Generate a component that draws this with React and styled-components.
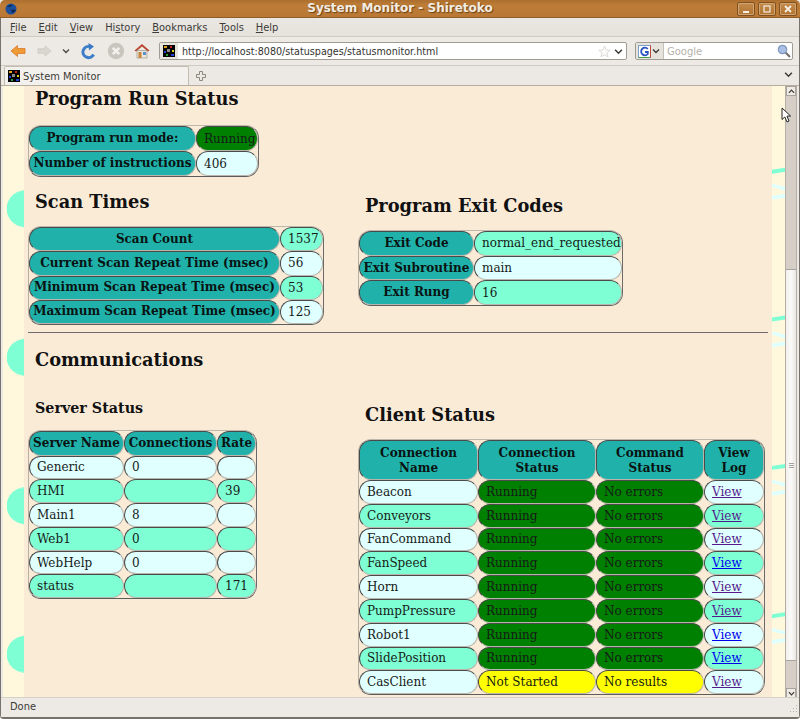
import React from "react";
import styled, { createGlobalStyle } from "styled-components";

const COLORS = {
  page: "#faebd7",
  strip: "#fff8dc",
  head: "#20b2aa",
  cyan: "#e0ffff",
  aqua: "#7fffd4",
  green: "#008000",
  yellow: "#ffff00",
  chrome: "#edeae5",
  line: "#cfcac2",
};

const Global = createGlobalStyle`
  html, body { margin: 0; padding: 0; overflow: hidden; }
  body { font-family: "DejaVu Sans", sans-serif; background: ${COLORS.chrome}; }
`;

const Window = styled.div`
  position: relative;
  width: 800px;
  height: 719px;
  display: flex;
  flex-direction: column;
  box-sizing: border-box;
  overflow: hidden;
  border-bottom: 2px solid #77736c;
  border-radius: 5px 5px 4px 4px;
  background: ${COLORS.chrome};
  color: #3c3b37;
  font-size: 9.9px;
`;

const TitleBar = styled.div`
  height: 18px;
  flex: none;
  display: flex;
  align-items: center;
  justify-content: space-between;
  padding: 0 3px 0 5px;
  background: linear-gradient(#ad6f2e, #bd7d38 30%, #b97733);
  border-bottom: 1px solid #8f5c28;
  box-sizing: border-box;
`;

const TitleText = styled.div`
  position: absolute;
  left: 0;
  right: 0;
  top: 1px;
  text-align: center;
  font-size: 12px;
  font-weight: bold;
  line-height: 15px;
  color: #f2ece2;
  text-shadow: 1px 1px 1px #6b4315;
`;

const WinButtons = styled.div`
  display: flex;
  gap: 3px;
`;

const WinButton = styled.div`
  width: 16px;
  height: 12px;
  border: 1px solid #80511f;
  border-radius: 2px;
  background: linear-gradient(#c48b4d, #b1742f);
  box-shadow: inset 0 0 0 1px #d2a471;
  display: flex;
  align-items: center;
  justify-content: center;
`;

const Body = styled.div`
  flex: 1;
  display: flex;
  flex-direction: column;
  border-left: 1px solid #77736c;
  border-right: 1px solid #77736c;
  min-height: 0;
`;

const MenuBar = styled.div`
  height: 18px;
  flex: none;
  display: flex;
  align-items: center;
  gap: 12px;
  padding-left: 9px;
  background: linear-gradient(#eae7e2, #e6e2dc);
  border-bottom: 1px solid ${COLORS.line};
`;

const Mnemonic = styled.span`
  text-decoration: underline;
`;

const NavBar = styled.div`
  height: 29px;
  flex: none;
  display: flex;
  align-items: center;
  padding: 0 6px 0 9px;
  box-sizing: border-box;
  border-bottom: 1px solid ${COLORS.line};
`;

const NavIcon = styled.svg`
  flex: none;
  margin-right: ${(p) => p.$gap}px;
`;

const UrlBox = styled.div`
  width: 468px;
  height: 18px;
  flex: none;
  box-sizing: border-box;
  display: flex;
  align-items: center;
  background: #fff;
  border: 1px solid #a09c94;
  border-radius: 2px;
  margin-right: 8px;
`;

const SiteBadge = styled.div`
  width: 18px;
  height: 16px;
  flex: none;
  display: flex;
  align-items: center;
  justify-content: center;
  background: #e6e2dc;
  margin-right: 4px;
`;

const UrlText = styled.span`
  flex: 1;
  font-size: 9.6px;
  color: #33322f;
  white-space: nowrap;
`;

const UrlDrop = styled.svg`
  flex: none;
  margin: 0 3px;
`;

const SearchBox = styled(UrlBox)`
  width: 158px;
  margin-right: 0;
`;

const EnginePicker = styled.div`
  width: 28px;
  height: 16px;
  flex: none;
  display: flex;
  align-items: center;
  gap: 1px;
  padding-left: 2px;
  box-sizing: border-box;
  background: #e6e2dc;
  border-right: 1px solid #c4c0b8;
  margin-right: 3px;
`;

const Placeholder = styled.span`
  flex: 1;
  font-size: 10px;
  color: #b5b1a9;
`;

const SearchLens = styled.svg`
  flex: none;
  margin-right: 1px;
`;

const TabStrip = styled.div`
  height: 20px;
  flex: none;
  display: flex;
  align-items: flex-end;
  padding: 0 6px 0 3px;
  box-sizing: border-box;
  background: #ece9e4;
  border-bottom: 1px solid #b5ada0;
`;

const Tab = styled.div`
  width: 185px;
  height: 19px;
  flex: none;
  display: flex;
  align-items: center;
  gap: 3px;
  padding-left: 3px;
  box-sizing: border-box;
  background: #f3f1ee;
  border: 1px solid #c4bcae;
  border-bottom: none;
  border-radius: 2px 2px 0 0;
  margin-right: 6px;
`;

const NewTab = styled.svg`
  flex: none;
  margin-bottom: 3px;
`;

const TabSpacer = styled.div`
  flex: 1;
`;

const TabListButton = styled.span`
  margin-bottom: 4px;
`;

const Viewport = styled.div`
  flex: 1;
  display: flex;
  min-height: 0;
  overflow: hidden;
  padding-left: 2px;
`;

const LeftStrip = styled.div`
  width: 21px;
  flex: none;
  background-color: ${COLORS.strip};
  background-image: radial-gradient(circle at 22px 74.25px, ${COLORS.aqua} 18px, transparent 18.6px);
  background-size: 21px 148.5px;
  background-position: 0 48.5px;
`;

const Page = styled.div`
  width: 748px;
  flex: none;
  background: ${COLORS.page};
  font-family: "DejaVu Serif", serif;
  color: #000;
  padding-left: 4px;
  box-sizing: border-box;
`;

const RightStrip = styled.svg`
  width: 13px;
  flex: none;
  background: ${COLORS.strip};
`;

const Scrollbar = styled.div`
  width: 10px;
  flex: none;
  display: flex;
  flex-direction: column;
  background: #d6cfc8;
  border-left: 1px solid #b5aea6;
  border-right: 1px solid #b5aea6;
`;

const ScrollArrow = styled.div`
  height: 10px;
  flex: none;
  background: #efece8;
  border: 1px solid #a8a29a;
  box-sizing: border-box;
  display: flex;
  align-items: center;
  justify-content: center;
`;

const ScrollGap = styled.div`
  height: ${(p) => p.$h}px;
  flex: none;
`;

const ScrollThumb = styled.div`
  height: 392px;
  flex: none;
  background: linear-gradient(90deg, #f2f0ed, #fbfaf9 50%, #e9e6e2);
  border-top: 1px solid #a8a29a;
  border-bottom: 1px solid #a8a29a;
  box-sizing: border-box;
  display: flex;
  flex-direction: column;
  align-items: center;
  justify-content: center;
  gap: 1px;
`;

const Grip = styled.div`
  width: 5px;
  height: 1px;
  background: #a8a29a;
`;

const StatusBar = styled.div`
  height: 20px;
  flex: none;
  display: flex;
  align-items: center;
  justify-content: space-between;
  padding: 0 1px 3px 9px;
  background: ${COLORS.chrome};
  border-top: 1px solid #d6d2ca;
  box-sizing: border-box;
`;

const ResizeGrip = styled.svg`
  flex: none;
  align-self: flex-end;
`;

const Pointer = styled.svg`
  position: absolute;
  left: 781px;
  top: 107px;
`;

const Columns = styled.div`
  display: grid;
  grid-template-columns: 330px 1fr;
`;

const Stack = styled.div`
  padding-top: ${(p) => p.$top || 0}px;
`;

const Heading = styled.h2`
  margin: ${(p) => p.$mt || 0}px 0 0 7px;
  font-size: 17.8px;
  line-height: 26px;
  font-weight: bold;
  color: #111;
`;

const SubHeading = styled.h3`
  margin: 0 0 0 7px;
  font-size: 14.3px;
  line-height: 18px;
  font-weight: bold;
  color: #111;
`;

const Table = styled.table`
  table-layout: fixed;
  border-collapse: separate;
  border-spacing: 0;
  width: ${(p) => p.$w}px;
  box-sizing: border-box;
  border: 1px solid;
  border-color: #bdb7ac #6a6a6a #5d5d5d #b5afa4;
  border-radius: 13px;
  font-size: 12px;
  margin-top: ${(p) => p.$mt}px;
`;

const CELL_BG = {
  head: COLORS.head,
  cyan: COLORS.cyan,
  aqua: COLORS.aqua,
  green: COLORS.green,
  yellow: COLORS.yellow,
};

const cellBase = `
  box-sizing: border-box;
  border: 1px solid;
  border-color: #4a4a4a #b9b5ad #b9b5ad #4a4a4a;
  border-radius: 12px;
  white-space: nowrap;
`;

const HeadCell = styled.th`
  ${cellBase}
  height: ${(p) => p.$h || 24}px;
  background: ${COLORS.head};
  padding: ${(p) => p.$drop || 0}px 0 0;
  text-align: center;
  font-weight: bold;
  color: #0a1212;
  line-height: 15px;
`;

const Cell = styled.td`
  ${cellBase}
  height: ${(p) => p.$h || 24}px;
  background: ${(p) => CELL_BG[p.$tone]};
  padding: 0 0 0 7px;
  color: #151a18;
`;

const LogLink = styled.a`
  color: ${(p) => (p.$visited ? "#551a8b" : "#0000ee")};
  text-decoration: underline;
`;

const Rule = styled.hr`
  width: 740px;
  margin: 7px 0 0 0;
  border: none;
  border-top: 1px solid #6c6c6c;
`;

const STRIPE_TOPS = [83, 231, 379.5, 528];

const Stripes = () => (
  <RightStrip viewBox="0 0 13 612" preserveAspectRatio="none">
    {STRIPE_TOPS.map((y) => (
      <g key={y}>
        <polygon points={`0,${y + 1} 13,${y - 1} 13,${y + 3} 0,${y + 5}`} fill={COLORS.aqua} />
        <polygon points={`0,${y + 15} 13,${y + 18} 13,${y + 22} 0,${y + 18}`} fill={COLORS.cyan} />
        <polygon points={`0,${y + 27} 13,${y + 25} 13,${y + 29} 0,${y + 31}`} fill={COLORS.cyan} />
      </g>
    ))}
  </RightStrip>
);

const Chevron = ({ size = 7, up = false }) => (
  <svg width={size} height={size} viewBox="0 0 8 8">
    <path d={up ? "M1 5.5 L4 2.5 L7 5.5" : "M1 2.5 L4 5.5 L7 2.5"} fill="none" stroke="#3c3b37" strokeWidth="1.4" />
  </svg>
);

const Favicon = ({ size = 12 }) => (
  <svg width={size} height={size} viewBox="0 0 12 12">
    <rect width="12" height="12" fill="#000" />
    <rect x="1" y="1" width="3" height="2" fill="#e0a020" />
    <rect x="7" y="1" width="2" height="2" fill="#d02020" />
    <rect x="4" y="4" width="3" height="3" fill="#8a8a8a" />
    <rect x="9" y="5" width="2" height="2" fill="#e0d020" />
    <rect x="1" y="6" width="2" height="2" fill="#2040d0" />
    <rect x="3" y="9" width="2" height="2" fill="#20a030" />
    <rect x="8" y="9" width="3" height="2" fill="#2040d0" />
  </svg>
);

const MonitorTable = ({ width, top, cols, children }) => (
  <Table $w={width} $mt={top}>
    <colgroup>
      {cols.map((w, i) => (
        <col key={i} width={w} />
      ))}
    </colgroup>
    <tbody>{children}</tbody>
  </Table>
);

const runStatus = [["Number of instructions", "406", "cyan"]];
const scanTimes = [
  ["Scan Count", "1537", "aqua"],
  ["Current Scan Repeat Time (msec)", "56", "cyan"],
  ["Minimum Scan Repeat Time (msec)", "53", "aqua"],
  ["Maximum Scan Repeat Time (msec)", "125", "cyan"],
];
const exitCodes = [
  ["Exit Code", "normal_end_requested", "aqua"],
  ["Exit Subroutine", "main", "cyan"],
  ["Exit Rung", "16", "aqua"],
];
const servers = [
  ["Generic", "0", ""],
  ["HMI", "", "39"],
  ["Main1", "8", ""],
  ["Web1", "0", ""],
  ["WebHelp", "0", ""],
  ["status", "", "171"],
];
const clients = [
  ["Beacon", true, true],
  ["Conveyors", true, true],
  ["FanCommand", true, true],
  ["FanSpeed", true, false],
  ["Horn", true, true],
  ["PumpPressure", true, true],
  ["Robot1", true, false],
  ["SlidePosition", true, false],
  ["CasClient", false, true],
];

const rowTone = (i) => (i % 2 === 0 ? "cyan" : "aqua");

export default function App() {
  return (
    <Window>
      <Global />
      <TitleBar>
        <svg width="12" height="12" viewBox="0 0 12 12">
          <circle cx="6" cy="6" r="5.5" fill="#1d4f9c" />
          <path d="M2 4 Q5 1 8 2 Q6 4 4 4 Z M6 7 Q9 6 11 7 Q9 10 7 10 Z" fill="#0d2a55" />
        </svg>
        <TitleText>System Monitor - Shiretoko</TitleText>
        <WinButtons>
          <WinButton>
            <svg width="8" height="8" viewBox="0 0 8 8">
              <rect x="1" y="6" width="6" height="2" fill="#f4eee4" />
            </svg>
          </WinButton>
          <WinButton>
            <svg width="8" height="8" viewBox="0 0 8 8">
              <rect x="1" y="1" width="6" height="6" fill="none" stroke="#f4eee4" strokeWidth="1.2" />
            </svg>
          </WinButton>
          <WinButton>
            <svg width="8" height="8" viewBox="0 0 8 8">
              <path d="M1 1 L7 7 M7 1 L1 7" stroke="#f4eee4" strokeWidth="1.8" />
            </svg>
          </WinButton>
        </WinButtons>
      </TitleBar>
      <Body>
        <MenuBar>
          <span><Mnemonic>F</Mnemonic>ile</span>
          <span><Mnemonic>E</Mnemonic>dit</span>
          <span><Mnemonic>V</Mnemonic>iew</span>
          <span>Hi<Mnemonic>s</Mnemonic>tory</span>
          <span><Mnemonic>B</Mnemonic>ookmarks</span>
          <span><Mnemonic>T</Mnemonic>ools</span>
          <span><Mnemonic>H</Mnemonic>elp</span>
        </MenuBar>
        <NavBar>
          <NavIcon $gap={11} width="16" height="14" viewBox="0 0 16 14">
            <path d="M1 7 L7.5 1.5 V4.5 H15 V9.5 H7.5 V12.5 Z" fill="#f09a35" stroke="#d9792a" strokeWidth="0.8" />
          </NavIcon>
          <NavIcon $gap={10} width="15" height="14" viewBox="0 0 16 14">
            <path d="M15 7 L8.5 1.5 V4.5 H1 V9.5 H8.5 V12.5 Z" fill="#d9d6d0" stroke="#cdcac4" strokeWidth="0.8" />
          </NavIcon>
          <NavIcon $gap={11} width="8" height="8" viewBox="0 0 8 8">
            <path d="M1 2.5 L4 5.5 L7 2.5" fill="none" stroke="#4a4a46" strokeWidth="1.4" />
          </NavIcon>
          <NavIcon $gap={10} width="16" height="17" viewBox="0 0 16 17">
            <path d="M12.6 11.5 A5.6 5.6 0 1 1 9 3.6" fill="none" stroke="#3f7fc9" strokeWidth="3" />
            <path d="M7.5 0 L13 3.6 L8 7.6 Z" fill="#3a78c4" />
          </NavIcon>
          <NavIcon $gap={9} width="18" height="18" viewBox="0 0 18 18">
            <circle cx="9" cy="9" r="8.2" fill="#c9c6c0" />
            <path d="M5.8 5.8 L12.2 12.2 M12.2 5.8 L5.8 12.2" stroke="#f2f0ec" strokeWidth="2.6" />
          </NavIcon>
          <NavIcon $gap={9} width="16" height="16" viewBox="0 0 16 16">
            <path d="M0.5 7.5 L8 1 L15.5 7.5 L14 8.5 L8 3.5 L2 8.5 Z" fill="#b8452f" />
            <rect x="3" y="7.5" width="10" height="7.5" fill="#ece6da" stroke="#8f8a80" strokeWidth="0.6" />
            <rect x="4.5" y="9" width="3" height="6" fill="#c9843a" />
            <rect x="9" y="9" width="3" height="3" fill="#5b92c9" />
          </NavIcon>
          <UrlBox>
            <SiteBadge>
              <Favicon />
            </SiteBadge>
            <UrlText>http://localhost:8080/statuspages/statusmonitor.html</UrlText>
            <svg width="13" height="13" viewBox="0 0 24 24">
              <path d="M12 2 L15 9 L22.5 9.7 L16.8 14.6 L18.6 22 L12 18 L5.4 22 L7.2 14.6 L1.5 9.7 L9 9 Z" fill="#fbfaf8" stroke="#d8d5cf" strokeWidth="1.6" />
            </svg>
            <UrlDrop width="9" height="9" viewBox="0 0 8 8">
              <path d="M1 2.5 L4 5.5 L7 2.5" fill="none" stroke="#3c3b37" strokeWidth="1.4" />
            </UrlDrop>
          </UrlBox>
          <SearchBox>
            <EnginePicker>
              <svg width="13" height="13" viewBox="0 0 13 13">
                <rect x="0.5" y="0.5" width="12" height="12" fill="#fff" stroke="#7f9fd0" />
                <path d="M9.8 4 A3.8 3.8 0 1 0 9.8 9 V7 H7" fill="none" stroke="#2a55c0" strokeWidth="1.8" />
                <path d="M0.5 12.5 H12.5" stroke="#4aa04a" />
                <path d="M12.5 0.5 V12.5" stroke="#c04a3a" />
              </svg>
              <Chevron size={8} />
            </EnginePicker>
            <Placeholder>Google</Placeholder>
            <SearchLens width="14" height="14" viewBox="0 0 14 14">
              <circle cx="5.5" cy="5.5" r="4.2" fill="#a9c0e4" stroke="#7f97bd" strokeWidth="1.2" />
              <path d="M8.8 8.8 L13 13" stroke="#6f6f6c" strokeWidth="2" />
            </SearchLens>
          </SearchBox>
        </NavBar>
        <TabStrip>
          <Tab>
            <Favicon />
            System Monitor
          </Tab>
          <NewTab width="12" height="12" viewBox="0 0 12 12">
            <path d="M4.5 1.5 H7.5 V4.5 H10.5 V7.5 H7.5 V10.5 H4.5 V7.5 H1.5 V4.5 H4.5 Z" fill="#ece9e4" stroke="#8c8880" />
          </NewTab>
          <TabSpacer />
          <TabListButton>
            <Chevron size={9} />
          </TabListButton>
        </TabStrip>
        <Viewport>
          <LeftStrip />
          <Page>
            <Columns>
              <Stack>
                <Heading>Program Run Status</Heading>
                <MonitorTable width={231} top={13} cols={[167, 62]}>
                  <tr>
                    <HeadCell $h={25}>Program run mode:</HeadCell>
                    <Cell $h={25} $tone="green">Running</Cell>
                  </tr>
                  {runStatus.map(([label, value, tone]) => (
                    <tr key={label}>
                      <HeadCell $h={25}>{label}</HeadCell>
                      <Cell $h={25} $tone={tone}>{value}</Cell>
                    </tr>
                  ))}
                </MonitorTable>
                <Heading $mt={12}>Scan Times</Heading>
                <MonitorTable width={296} top={11} cols={[251, 43]}>
                  {scanTimes.map(([label, value, tone]) => (
                    <tr key={label}>
                      <HeadCell $h={24.25}>{label}</HeadCell>
                      <Cell $h={24.25} $tone={tone}>{value}</Cell>
                    </tr>
                  ))}
                </MonitorTable>
              </Stack>
              <Stack $top={107}>
                <Heading>Program Exit Codes</Heading>
                <MonitorTable width={265} top={11} cols={[115, 148]}>
                  {exitCodes.map(([label, value, tone]) => (
                    <tr key={label}>
                      <HeadCell $h={24.7}>{label}</HeadCell>
                      <Cell $h={24.7} $tone={tone}>{value}</Cell>
                    </tr>
                  ))}
                </MonitorTable>
              </Stack>
            </Columns>
            <Rule />
            <Heading $mt={14}>Communications</Heading>
            <Columns>
              <Stack $top={26}>
                <SubHeading>Server Status</SubHeading>
                <MonitorTable width={229} top={13} cols={[95, 93, 39]}>
                  <tr>
                    <HeadCell $h={24.5} $drop={1}>Server Name</HeadCell>
                    <HeadCell $h={24.5} $drop={1}>Connections</HeadCell>
                    <HeadCell $h={24.5} $drop={1}>Rate</HeadCell>
                  </tr>
                  {servers.map(([name, conns, rate], i) => (
                    <tr key={name}>
                      <Cell $h={23.8} $tone={rowTone(i)}>{name}</Cell>
                      <Cell $h={23.8} $tone={rowTone(i)}>{conns}</Cell>
                      <Cell $h={23.8} $tone={rowTone(i)}>{rate}</Cell>
                    </tr>
                  ))}
                </MonitorTable>
              </Stack>
              <Stack $top={29}>
                <Heading>Client Status</Heading>
                <MonitorTable width={407} top={11} cols={[119, 118, 108, 60]}>
                  <tr>
                    <HeadCell $h={40} $drop={2}>Connection<br />Name</HeadCell>
                    <HeadCell $h={40} $drop={2}>Connection<br />Status</HeadCell>
                    <HeadCell $h={40} $drop={2}>Command<br />Status</HeadCell>
                    <HeadCell $h={40} $drop={2}>View<br />Log</HeadCell>
                  </tr>
                  {clients.map(([name, running, visited], i) => (
                    <tr key={name}>
                      <Cell $h={23.8} $tone={rowTone(i)}>{name}</Cell>
                      <Cell $h={23.8} $tone={running ? "green" : "yellow"}>{running ? "Running" : "Not Started"}</Cell>
                      <Cell $h={23.8} $tone={running ? "green" : "yellow"}>{running ? "No errors" : "No results"}</Cell>
                      <Cell $h={23.8} $tone={rowTone(i)}>
                        <LogLink href="#" $visited={visited}>View</LogLink>
                      </Cell>
                    </tr>
                  ))}
                </MonitorTable>
              </Stack>
            </Columns>
          </Page>
          <Stripes />
          <Scrollbar>
            <ScrollArrow>
              <Chevron size={7} up />
            </ScrollArrow>
            <ScrollGap $h={173} />
            <ScrollThumb>
              <Grip />
              <Grip />
              <Grip />
            </ScrollThumb>
            <ScrollGap $h={27} />
            <ScrollArrow>
              <Chevron size={7} />
            </ScrollArrow>
          </Scrollbar>
        </Viewport>
        <StatusBar>
          Done
          <ResizeGrip width="10" height="10" viewBox="0 0 10 10">
            <path d="M8 1 h1 v1 h-1 z M5 4 h1 v1 h-1 z M8 4 h1 v1 h-1 z M2 7 h1 v1 h-1 z M5 7 h1 v1 h-1 z M8 7 h1 v1 h-1 z" fill="#b5b1a9" />
          </ResizeGrip>
        </StatusBar>
      </Body>
      <Pointer width="11" height="17" viewBox="0 0 11 17">
        <path d="M1 1 L1 12.5 L3.8 10 L6 15 L8 14 L6 9.2 L9.6 9 Z" fill="#fff" stroke="#222" strokeWidth="1" />
      </Pointer>
    </Window>
  );
}
